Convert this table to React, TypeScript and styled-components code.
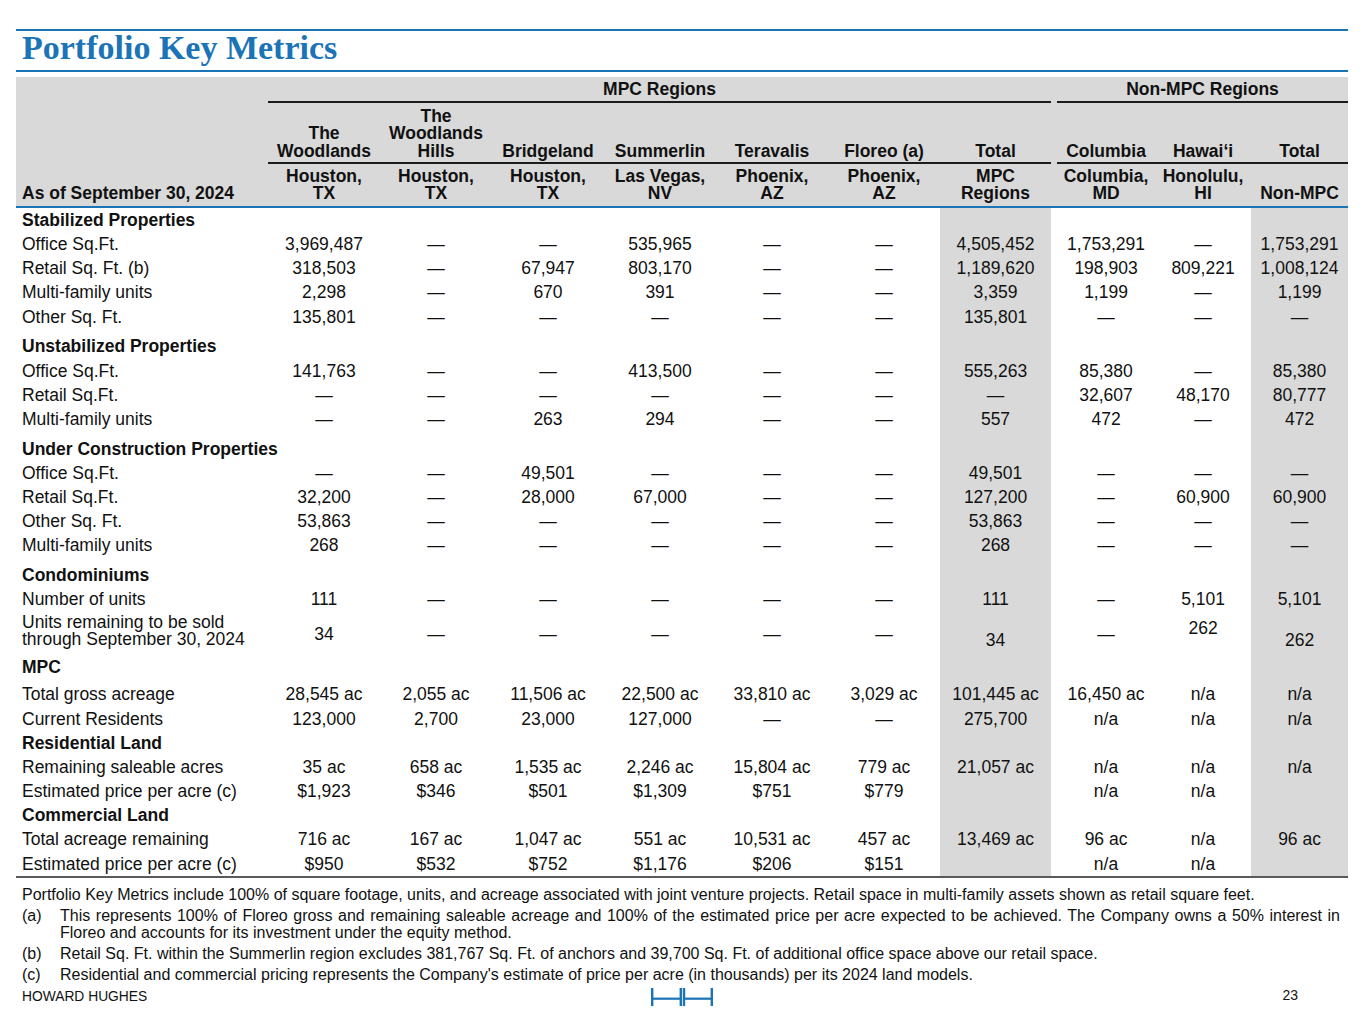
import React from 'react';
import styled, { createGlobalStyle } from 'styled-components';

const BLUE = '#1b74b6';
const SHADE = '#d9d9d9';
const INK = '#111111';

type Row =
  | { kind: 'section'; label: string; gap?: number }
  | { kind: 'data'; label: React.ReactNode; values: string[]; gap?: number; tall?: boolean };

const D = '—';

const rows: Row[] = [
  { kind: 'section', label: 'Stabilized Properties' },
  { kind: 'data', label: 'Office Sq.Ft.', values: ['3,969,487', D, D, '535,965', D, D, '4,505,452', '1,753,291', D, '1,753,291'] },
  { kind: 'data', label: 'Retail Sq. Ft. (b)', values: ['318,503', D, '67,947', '803,170', D, D, '1,189,620', '198,903', '809,221', '1,008,124'] },
  { kind: 'data', label: 'Multi-family units', values: ['2,298', D, '670', '391', D, D, '3,359', '1,199', D, '1,199'] },
  { kind: 'data', label: 'Other Sq. Ft.', values: ['135,801', D, D, D, D, D, '135,801', D, D, D] },
  { kind: 'section', label: 'Unstabilized Properties', gap: 5.7 },
  { kind: 'data', label: 'Office Sq.Ft.', values: ['141,763', D, D, '413,500', D, D, '555,263', '85,380', D, '85,380'] },
  { kind: 'data', label: 'Retail Sq.Ft.', values: [D, D, D, D, D, D, D, '32,607', '48,170', '80,777'] },
  { kind: 'data', label: 'Multi-family units', values: [D, D, '263', '294', D, D, '557', '472', D, '472'] },
  { kind: 'section', label: 'Under Construction Properties', gap: 5.7 },
  { kind: 'data', label: 'Office Sq.Ft.', values: [D, D, '49,501', D, D, D, '49,501', D, D, D] },
  { kind: 'data', label: 'Retail Sq.Ft.', values: ['32,200', D, '28,000', '67,000', D, D, '127,200', D, '60,900', '60,900'] },
  { kind: 'data', label: 'Other Sq. Ft.', values: ['53,863', D, D, D, D, D, '53,863', D, D, D] },
  { kind: 'data', label: 'Multi-family units', values: ['268', D, D, D, D, D, '268', D, D, D] },
  { kind: 'section', label: 'Condominiums', gap: 5.7 },
  { kind: 'data', label: 'Number of units', values: ['111', D, D, D, D, D, '111', D, '5,101', '5,101'] },
  {
    kind: 'data',
    label: (
      <>
        Units remaining to be sold
        <br />
        through September 30, 2024
      </>
    ),
    values: ['34', D, D, D, D, D, '34', D, '262', '262'],
    tall: true,
  },
  { kind: 'section', label: 'MPC', gap: 5.7 },
  { kind: 'data', label: 'Total gross acreage', gap: 3, values: ['28,545 ac', '2,055 ac', '11,506 ac', '22,500 ac', '33,810 ac', '3,029 ac', '101,445 ac', '16,450 ac', 'n/a', 'n/a'] },
  { kind: 'data', label: 'Current Residents', values: ['123,000', '2,700', '23,000', '127,000', D, D, '275,700', 'n/a', 'n/a', 'n/a'] },
  { kind: 'section', label: 'Residential Land' },
  { kind: 'data', label: 'Remaining saleable acres', values: ['35 ac', '658 ac', '1,535 ac', '2,246 ac', '15,804 ac', '779 ac', '21,057 ac', 'n/a', 'n/a', 'n/a'] },
  { kind: 'data', label: 'Estimated price per acre (c)', values: ['$1,923', '$346', '$501', '$1,309', '$751', '$779', '', 'n/a', 'n/a', ''] },
  { kind: 'section', label: 'Commercial Land' },
  { kind: 'data', label: 'Total acreage remaining', values: ['716 ac', '167 ac', '1,047 ac', '551 ac', '10,531 ac', '457 ac', '13,469 ac', '96 ac', 'n/a', '96 ac'] },
  { kind: 'data', label: 'Estimated price per acre (c)', values: ['$950', '$532', '$752', '$1,176', '$206', '$151', '', 'n/a', 'n/a', ''] },
];

const mpcCols: { name: React.ReactNode; place: React.ReactNode }[] = [
  { name: <>The<br />Woodlands</>, place: <>Houston,<br />TX</> },
  { name: <>The<br />Woodlands<br />Hills</>, place: <>Houston,<br />TX</> },
  { name: 'Bridgeland', place: <>Houston,<br />TX</> },
  { name: 'Summerlin', place: <>Las Vegas,<br />NV</> },
  { name: 'Teravalis', place: <>Phoenix,<br />AZ</> },
  { name: 'Floreo (a)', place: <>Phoenix,<br />AZ</> },
];

const widths = [252, 112, 112, 112, 112, 112, 112, 111, 6, 98, 96, 97];

const GlobalStyle = createGlobalStyle`
  html, body {
    margin: 0;
    padding: 0;
    background: #ffffff;
  }
  body {
    font-family: 'Liberation Sans', Arial, sans-serif;
    color: ${INK};
  }
`;

const Page = styled.div`
  width: 1332px;
  padding: 29px 17px 0 16px;
`;

const Rule = styled.div<{ $color?: string; $after?: number }>`
  height: 2px;
  background: ${(p) => p.$color ?? BLUE};
  margin-bottom: ${(p) => p.$after ?? 0}px;
`;

const Title = styled.h1`
  margin: 0;
  padding: 0 0 5px 6px;
  font-family: 'Liberation Serif', 'Times New Roman', serif;
  font-size: 34px;
  line-height: 34px;
  font-weight: bold;
  color: ${BLUE};
`;

const Table = styled.table`
  width: 1332px;
  table-layout: fixed;
  border-collapse: separate;
  border-spacing: 0;
  font-size: 17.5px;
  color: ${INK};
`;

const Head = styled.thead`
  background: ${SHADE};
`;

const GroupHead = styled.th`
  padding: 0;
  line-height: 24px;
  font-weight: bold;
  text-align: center;
  border-bottom: 2px solid #1c1c1c;
`;

const ColHead = styled.th<{ $plain?: boolean }>`
  padding: 4.5px 0 2px;
  line-height: 17.5px;
  font-weight: bold;
  text-align: center;
  vertical-align: bottom;
  border-bottom: ${(p) => (p.$plain ? 'none' : '2px solid #1c1c1c')};
`;

const PlaceHead = styled.th`
  padding: 3.5px 0 4.5px;
  line-height: 17px;
  font-weight: bold;
  text-align: center;
  vertical-align: bottom;
  border-bottom: 2px solid ${BLUE};
`;

const AsOf = styled.th`
  padding: 0 0 4.5px 6px;
  line-height: 17px;
  font-weight: bold;
  text-align: left;
  vertical-align: bottom;
  border-bottom: 2px solid ${BLUE};
`;

const Spacer = styled.th`
  padding: 0;
`;

type VAlign = 'top' | 'mid' | 'bottom';

const Cell = styled.td<{ $shade?: boolean; $gap?: number; $tall?: boolean; $v?: VAlign }>`
  padding: ${(p) =>
    p.$tall
      ? p.$v === 'top'
        ? '8px 0 0'
        : p.$v === 'bottom'
        ? '0 0 1px'
        : '7px 0 0'
      : `${p.$gap ?? 0}px 0 0`};
  line-height: ${(p) => (p.$tall ? '17px' : '24.15px')};
  text-align: center;
  vertical-align: ${(p) => (p.$v === 'top' ? 'top' : p.$v === 'bottom' ? 'bottom' : 'middle')};
  white-space: nowrap;
  background: ${(p) => (p.$shade ? SHADE : 'transparent')};
`;

const Label = styled.td<{ $bold?: boolean; $gap?: number; $tall?: boolean }>`
  padding: ${(p) => (p.$tall ? '2px 0 2px 6px' : `${p.$gap ?? 0}px 0 0 6px`)};
  line-height: ${(p) => (p.$tall ? '17px' : '24.15px')};
  font-weight: ${(p) => (p.$bold ? 'bold' : 'normal')};
  text-align: left;
  white-space: nowrap;
`;

const Notes = styled.div`
  padding: 8px 8px 0 6px;
  font-size: 16px;
  line-height: 17.5px;
  color: ${INK};
`;

const Note = styled.div`
  display: flex;
  margin-top: 3.4px;
`;

const NoteMark = styled.span`
  flex: 0 0 38px;
`;

const NoteText = styled.span`
  flex: 1;
`;

const JustifiedLine = styled.span`
  display: block;
  text-align: justify;
  text-align-last: justify;
`;

const Footer = styled.div`
  display: grid;
  grid-template-columns: 1fr auto 1fr;
  align-items: center;
  height: 22px;
  padding-top: 1px;
  font-size: 13.8px;
  color: ${INK};
`;

const Brand = styled.span`
  padding-left: 6px;
`;

const LogoMark = styled.svg`
  display: block;
  margin-top: 4px;
`;

const PageNo = styled.span`
  justify-self: end;
  padding-right: 50px;
  font-size: 14px;
  margin-top: -4px;
`;

const Logo = () => (
  <LogoMark width="62" height="21" viewBox="0 0 62 21" aria-label="HH">
    <g fill={BLUE}>
      <rect x="0" y="0" width="2.4" height="21" />
      <rect x="0" y="9.6" width="30" height="2.2" />
      <rect x="28.6" y="0" width="2.4" height="21" />
      <rect x="31.8" y="0" width="2.4" height="21" />
      <rect x="32" y="9.6" width="30" height="2.2" />
      <rect x="59.6" y="0" width="2.4" height="21" />
    </g>
  </LogoMark>
);

const valignFor = (i: number): VAlign => (i === 6 || i === 9 ? 'bottom' : i === 8 ? 'top' : 'mid');

const BodyRow = ({ row }: { row: Row }) => {
  if (row.kind === 'section') {
    return (
      <tr>
        <Label colSpan={7} $bold $gap={row.gap}>
          {row.label}
        </Label>
        <Cell $shade $gap={row.gap} />
        <Cell />
        <Cell />
        <Cell />
        <Cell $shade $gap={row.gap} />
      </tr>
    );
  }
  const v = row.values;
  const cell = (i: number) => (
    <Cell key={i} $shade={i === 6 || i === 9} $gap={row.gap} $tall={row.tall} $v={row.tall ? valignFor(i) : 'mid'}>
      {v[i]}
    </Cell>
  );
  return (
    <tr>
      <Label $gap={row.gap} $tall={row.tall}>
        {row.label}
      </Label>
      {[0, 1, 2, 3, 4, 5, 6].map(cell)}
      <Cell />
      {[7, 8, 9].map(cell)}
    </tr>
  );
};

export default function App() {
  return (
    <>
      <GlobalStyle />
      <Page>
        <Rule />
        <Title>Portfolio Key Metrics</Title>
        <Rule $after={5} />
        <Table>
          <colgroup>
            {widths.map((w, i) => (
              <col key={i} style={{ width: w }} />
            ))}
          </colgroup>
          <Head>
            <tr>
              <AsOf rowSpan={3}>As of September 30, 2024</AsOf>
              <GroupHead colSpan={7}>MPC Regions</GroupHead>
              <Spacer />
              <GroupHead colSpan={3}>Non-MPC Regions</GroupHead>
            </tr>
            <tr>
              {mpcCols.map((c, i) => (
                <ColHead key={i}>{c.name}</ColHead>
              ))}
              <ColHead>Total</ColHead>
              <ColHead $plain />
              <ColHead>Columbia</ColHead>
              <ColHead>Hawai‘i</ColHead>
              <ColHead>Total</ColHead>
            </tr>
            <tr>
              {mpcCols.map((c, i) => (
                <PlaceHead key={i}>{c.place}</PlaceHead>
              ))}
              <PlaceHead>
                MPC
                <br />
                Regions
              </PlaceHead>
              <PlaceHead />
              <PlaceHead>
                Columbia,
                <br />
                MD
              </PlaceHead>
              <PlaceHead>
                Honolulu,
                <br />
                HI
              </PlaceHead>
              <PlaceHead>Non-MPC</PlaceHead>
            </tr>
          </Head>
          <tbody>
            {rows.map((r, i) => (
              <BodyRow key={i} row={r} />
            ))}
          </tbody>
        </Table>
        <Rule $color="#5a5a5a" />
        <Notes>
          <div>
            Portfolio Key Metrics include 100% of square footage, units, and acreage associated with joint venture
            projects. Retail space in multi-family assets shown as retail square feet.
          </div>
          <Note>
            <NoteMark>(a)</NoteMark>
            <NoteText>
              <JustifiedLine>
                This represents 100% of Floreo gross and remaining saleable acreage and 100% of the estimated price per
                acre expected to be achieved. The Company owns a 50% interest in
              </JustifiedLine>
              Floreo and accounts for its investment under the equity method.
            </NoteText>
          </Note>
          <Note>
            <NoteMark>(b)</NoteMark>
            <NoteText>
              Retail Sq. Ft. within the Summerlin region excludes 381,767 Sq. Ft. of anchors and 39,700 Sq. Ft. of
              additional office space above our retail space.
            </NoteText>
          </Note>
          <Note>
            <NoteMark>(c)</NoteMark>
            <NoteText>
              Residential and commercial pricing represents the Company's estimate of price per acre (in thousands) per
              its 2024 land models.
            </NoteText>
          </Note>
        </Notes>
        <Footer>
          <Brand>HOWARD HUGHES</Brand>
          <Logo />
          <PageNo>23</PageNo>
        </Footer>
      </Page>
    </>
  );
}
